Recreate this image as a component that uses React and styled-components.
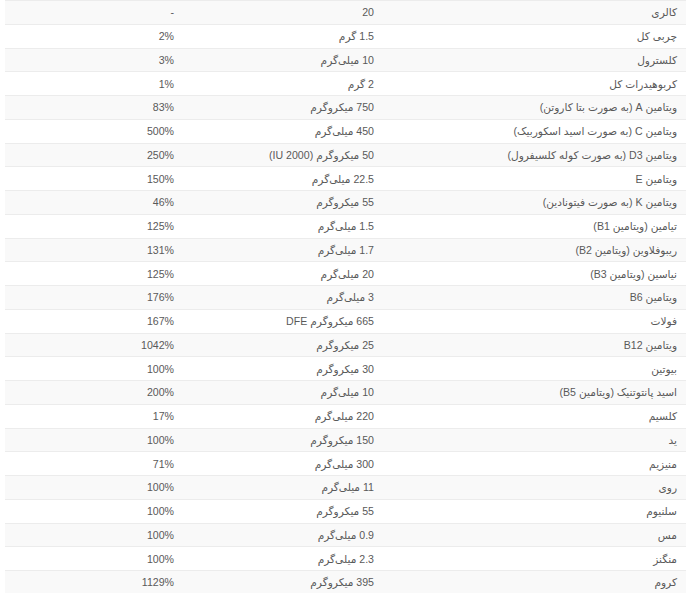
import React from "react";
import styled, { createGlobalStyle } from "styled-components";

const GlobalStyle = createGlobalStyle`
  html, body {
    margin: 0;
    padding: 0;
    background: #fff;
  }
`;

const Page = styled.div`
  padding: 0 0 0 5px;
`;

const FactsTable = styled.table`
  direction: rtl;
  width: 681px;
  border-collapse: collapse;
  font-family: "Liberation Sans", "DejaVu Sans", sans-serif;
  font-size: 10.6px;
  color: #595959;
`;

const Row = styled.tr`
  background-color: ${(p) => (p.$striped ? "#f9f9f9" : "#fff")};
  border-top: 1px solid #ececec;
`;

const Cell = styled.td`
  width: ${(p) => p.$width};
  height: 22.75px;
  padding: 0 9px 0 8px;
  text-align: right;
  vertical-align: middle;
  white-space: nowrap;
`;

const facts = [
  ["کالری", "20", "-"],
  ["چربی کل", "1.5 گرم", "2%"],
  ["کلسترول", "10 میلی‌گرم", "3%"],
  ["کربوهیدرات کل", "2 گرم", "1%"],
  ["ویتامین A (به صورت بتا کاروتن)", "750 میکروگرم", "83%"],
  ["ویتامین C (به صورت اسید اسکوربیک)", "450 میلی‌گرم", "500%"],
  ["ویتامین D3 (به صورت کوله کلسیفرول)", "50 میکروگرم (2000 IU)", "250%"],
  ["ویتامین E", "22.5 میلی‌گرم", "150%"],
  ["ویتامین K (به صورت فیتونادین)", "55 میکروگرم", "46%"],
  ["تیامین (ویتامین B1)", "1.5 میلی‌گرم", "125%"],
  ["ریبوفلاوین (ویتامین B2)", "1.7 میلی‌گرم", "131%"],
  ["نیاسین (ویتامین B3)", "20 میلی‌گرم", "125%"],
  ["ویتامین B6", "3 میلی‌گرم", "176%"],
  ["فولات", "665 میکروگرم DFE", "167%"],
  ["ویتامین B12", "25 میکروگرم", "1042%"],
  ["بیوتین", "30 میکروگرم", "100%"],
  ["اسید پانتوتنیک (ویتامین B5)", "10 میلی‌گرم", "200%"],
  ["کلسیم", "220 میلی‌گرم", "17%"],
  ["ید", "150 میکروگرم", "100%"],
  ["منیزیم", "300 میلی‌گرم", "71%"],
  ["روی", "11 میلی‌گرم", "100%"],
  ["سلنیوم", "55 میکروگرم", "100%"],
  ["مس", "0.9 میلی‌گرم", "100%"],
  ["منگنز", "2.3 میلی‌گرم", "100%"],
  ["کروم", "395 میکروگرم", "1129%"],
];

function App() {
  return (
    <Page>
      <GlobalStyle />
      <FactsTable>
        <tbody>
          {facts.map(([name, amount, percent], i) => (
            <Row key={name} $striped={i % 2 === 0}>
              <Cell $width="286px">{name}</Cell>
              <Cell $width="183px">{amount}</Cell>
              <Cell $width="161px">{percent}</Cell>
            </Row>
          ))}
        </tbody>
      </FactsTable>
    </Page>
  );
}

export default App;
